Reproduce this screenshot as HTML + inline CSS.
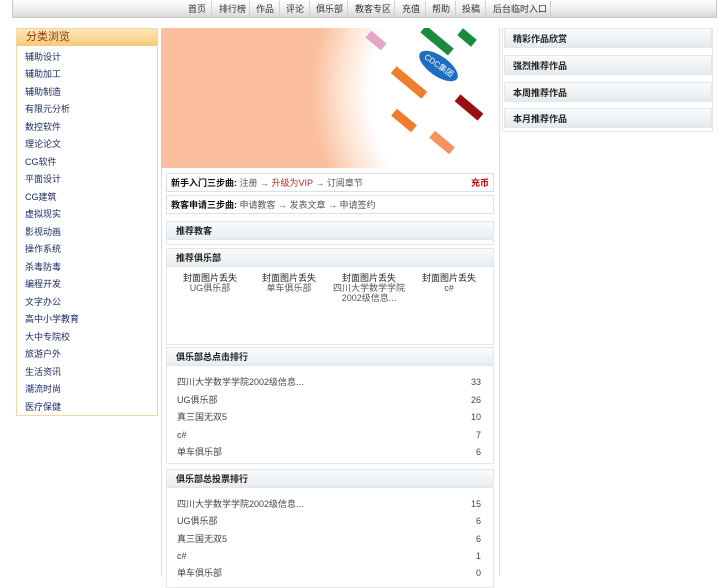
<!DOCTYPE html>
<html><head><meta charset="utf-8"><style>
*{margin:0;padding:0;box-sizing:border-box}
body{width:719px;height:576px;overflow:hidden;background:#fff;font-family:"Liberation Sans","Noto Sans CJK SC",sans-serif;font-size:9px;color:#333;position:relative}
.a{position:absolute}
.nav{left:12px;top:0;width:705px;height:18px;border:1px solid #c8c8c8;border-top:none;background:linear-gradient(#fff,#ececec 60%,#d8d8d8)}
.nav span{position:absolute;top:4px;font-size:9px;color:#333;line-height:10px}
.nav i{position:absolute;top:1px;width:1px;height:15px;background:#d0d0d0}
.side{left:16px;top:28px;width:142px;height:388px;border:1px solid #ecd9a6;background:#fff}
.side .h{height:17px;background:linear-gradient(#fde7b8,#f8c979);color:#8b3a0a;font-size:11px;padding:2px 0 0 9px;line-height:13px}
.side div.it{position:absolute;left:8px;font-size:9px;color:#1a2a66;line-height:10px}
.hd{position:absolute;left:166px;width:328px;height:19px;border:1px solid #e2e6ea;background:linear-gradient(#fafbfc,#e8edf1);font-weight:bold;font-size:9px;color:#222;padding:4px 0 0 9px;line-height:10px}
.rh{position:absolute;left:504px;width:208px;height:20px;border:1px solid #e2e6ea;background:linear-gradient(#fafbfc,#e6ebef);font-weight:bold;font-size:9px;color:#222;padding:5px 0 0 8px;line-height:10px}
.row{position:absolute;left:177px;width:304px;height:12px;font-size:9px;color:#444;line-height:12px}
.row b{position:absolute;right:0;top:0;font-weight:normal}
.cl{position:absolute;top:273px;width:80px;text-align:center;font-size:9px;color:#555;line-height:10px}
.cl span{color:#222}
</style></head><body>
<div class="a nav">
<span style="left:175px">首页</span><i style="left:198px"></i>
<span style="left:206px">排行榜</span><i style="left:236px"></i>
<span style="left:243px">作品</span><i style="left:266px"></i>
<span style="left:273px">评论</span><i style="left:296px"></i>
<span style="left:303px">俱乐部</span><i style="left:334px"></i>
<span style="left:342px">教客专区</span><i style="left:381px"></i>
<span style="left:389px">充值</span><i style="left:412px"></i>
<span style="left:419px">帮助</span><i style="left:442px"></i>
<span style="left:449px">投稿</span><i style="left:472px"></i>
<span style="left:480px">后台临时入口</span><i style="left:537px"></i>
</div>
<div class="a side"><div class="h">分类浏览</div>
<div class="it" style="top:23px">辅助设计</div><div class="it" style="top:40px">辅助加工</div><div class="it" style="top:58px">辅助制造</div><div class="it" style="top:75px">有限元分析</div><div class="it" style="top:93px">数控软件</div><div class="it" style="top:110px">理论论文</div><div class="it" style="top:128px">CG软件</div><div class="it" style="top:145px">平面设计</div><div class="it" style="top:163px">CG建筑</div><div class="it" style="top:180px">虚拟现实</div><div class="it" style="top:198px">影视动画</div><div class="it" style="top:215px">操作系统</div><div class="it" style="top:233px">杀毒防毒</div><div class="it" style="top:250px">编程开发</div><div class="it" style="top:268px">文字办公</div><div class="it" style="top:285px">高中小学教育</div><div class="it" style="top:303px">大中专院校</div><div class="it" style="top:320px">旅游户外</div><div class="it" style="top:338px">生活资讯</div><div class="it" style="top:355px">潮流时尚</div><div class="it" style="top:373px">医疗保健</div>
</div>
<div class="a" style="left:161px;top:28px;width:1px;height:548px;background:#ddd"></div>
<div class="a" style="left:499px;top:28px;width:1px;height:548px;background:#ddd"></div>
<div class="a" style="left:161px;top:28px;width:322px;height:140px;background:radial-gradient(circle at 110% 45%,#fff 0,#fff 40%,#fde3d2 48%,#fbbf9f 56%);overflow:hidden">
<div class="a" style="left:255px;top:28px;width:45px;height:20px;border-radius:50%;background:#1c6fc0;transform:rotate(35deg);color:#fff;font-size:8px;text-align:center;line-height:20px">CDC集团</div>
<div class="a" style="left:258px;top:8px;width:36px;height:9px;background:#1a8a3c;transform:rotate(40deg)"></div>
<div class="a" style="left:297px;top:5px;width:18px;height:9px;background:#1a8a3c;transform:rotate(40deg)"></div>
<div class="a" style="left:228px;top:50px;width:40px;height:9px;background:#f07c30;transform:rotate(40deg)"></div>
<div class="a" style="left:293px;top:75px;width:30px;height:9px;background:#9a1010;transform:rotate(40deg)"></div>
<div class="a" style="left:230px;top:88px;width:26px;height:9px;background:#f07c30;transform:rotate(40deg)"></div>
<div class="a" style="left:268px;top:110px;width:26px;height:9px;background:#f5935a;transform:rotate(40deg)"></div>
<div class="a" style="left:205px;top:8px;width:20px;height:9px;background:#e2a6c8;transform:rotate(40deg)"></div>
</div>
<div class="a" style="left:166px;top:173px;width:328px;height:19px;border:1px solid #dde;padding:4px 0 0 4px;color:#555;line-height:10px"><b style="color:#111">新手入门三步曲:</b> 注册 → <span style="color:#c0282a">升级为VIP</span> → 订阅章节<b style="position:absolute;right:4px;top:4px;color:#c00">充币</b></div>
<div class="a" style="left:166px;top:195px;width:328px;height:19px;border:1px solid #dde;padding:4px 0 0 4px;color:#555;line-height:10px"><b style="color:#111">教客申请三步曲:</b> 申请教客 → 发表文章 → 申请签约</div>
<div class="hd" style="top:221px">推荐教客</div>
<div class="a" style="left:166px;top:240px;width:328px;height:5px;border:1px solid #e4e8ec;border-top:none"></div>
<div class="hd" style="top:248px">推荐俱乐部</div>
<div class="a" style="left:166px;top:267px;width:328px;height:78px;border:1px solid #e4e8ec;border-top:none"></div>
<div class="cl" style="left:170px"><span>封面图片丢失</span><br>UG俱乐部</div>
<div class="cl" style="left:249px"><span>封面图片丢失</span><br>单车俱乐部</div>
<div class="cl" style="left:329px"><span>封面图片丢失</span><br>四川大学数学学院<br>2002级信息...</div>
<div class="cl" style="left:409px"><span>封面图片丢失</span><br>c#</div>
<div class="hd" style="top:347px">俱乐部总点击排行</div>
<div class="a" style="left:166px;top:366px;width:328px;height:98px;border:1px solid #e4e8ec;border-top:none"></div>
<div class="row" style="top:376px">四川大学数学学院2002级信息...<b>33</b></div>
<div class="row" style="top:394px">UG俱乐部<b>26</b></div>
<div class="row" style="top:411px">真三国无双5<b>10</b></div>
<div class="row" style="top:429px">c#<b>7</b></div>
<div class="row" style="top:446px">单车俱乐部<b>6</b></div>
<div class="hd" style="top:469px">俱乐部总投票排行</div>
<div class="a" style="left:166px;top:488px;width:328px;height:100px;border:1px solid #e4e8ec;border-top:none"></div>
<div class="row" style="top:498px">四川大学数学学院2002级信息...<b>15</b></div>
<div class="row" style="top:515px">UG俱乐部<b>6</b></div>
<div class="row" style="top:533px">真三国无双5<b>6</b></div>
<div class="row" style="top:550px">c#<b>1</b></div>
<div class="row" style="top:567px">单车俱乐部<b>0</b></div>
<div class="a" style="left:502px;top:28px;width:211px;height:104px;border:1px solid #e4e8ec"></div>
<div class="rh" style="top:28px">精彩作品欣赏</div>
<div class="rh" style="top:55px">强烈推荐作品</div>
<div class="rh" style="top:82px">本周推荐作品</div>
<div class="rh" style="top:108px">本月推荐作品</div>
</body></html>
